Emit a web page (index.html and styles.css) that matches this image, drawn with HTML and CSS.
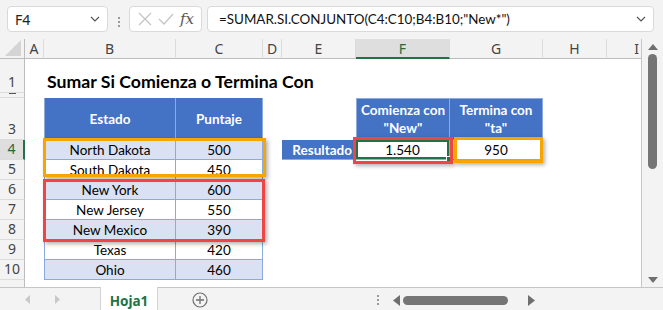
FILE: index.html
```html
<!DOCTYPE html>
<html lang="es">
<head>
    <meta charset="UTF-8">
    <meta name="viewport" content="width=device-width, initial-scale=1.0">
    <title>Sumar Si Comienza o Termina Con</title>
    <link rel="stylesheet" href="styles.css">
</head>
<body>

<div class="app">
    <!-- Barra de fórmulas -->
    <div class="formula-bar">
        <div class="name-box">
            <span>F4</span>
            <svg class="chev" width="10" height="6" viewBox="0 0 10 6"><path d="M1 1l4 4 4-4" fill="none" stroke="#555" stroke-width="1.2"/></svg>
        </div>
        <div class="grip"><i></i><i></i><i></i></div>
        <div class="fx-box">
            <svg width="14" height="14" viewBox="0 0 14 14"><path d="M1 1l12 12M13 1L1 13" stroke="#c4c4c4" stroke-width="1.3"/></svg>
            <svg width="16" height="12" viewBox="0 0 16 12"><path d="M1 6l5 5L15 1" fill="none" stroke="#c4c4c4" stroke-width="1.3"/></svg>
            <span class="fx">fx</span>
        </div>
        <div class="formula">
            <span>=SUMAR.SI.CONJUNTO(C4:C10;B4:B10;"New*")</span>
            <svg class="chev" width="10" height="6" viewBox="0 0 10 6"><path d="M1 1l4 4 4-4" fill="none" stroke="#555" stroke-width="1.2"/></svg>
        </div>
    </div>

    <div class="workspace">
        <div class="sheet">
            <!-- Encabezados de columna -->
            <div class="row col-head">
                <div class="corner"><svg width="16" height="16" viewBox="0 0 16 16"><path d="M16 0V16H0z" fill="#d4d4d4"/></svg></div>
                <div>A</div><div>B</div><div>C</div><div>D</div><div>E</div>
                <div class="sel">F</div><div>G</div><div>H</div><div>I</div>
            </div>

            <div class="row h34">
                <div class="rh">1</div><div></div>
                <div class="title">Sumar Si Comienza o Termina Con</div>
            </div>
            <div class="row h5">
                <div class="rh clipped"></div>
            </div>
            <div class="row h42">
                <div class="rh">3</div><div></div>
                <div class="th first">Estado</div>
                <div class="th">Puntaje</div>
                <div></div><div></div>
                <div class="th top first">Comienza con<br>"New"</div>
                <div class="th top">Termina con<br>"ta"</div>
            </div>
            <div class="row">
                <div class="rh sel">4</div><div></div>
                <div class="td first band">North Dakota</div>
                <div class="td band">500</div>
                <div></div>
                <div class="label">Resultado</div>
                <div class="res active">1.540<span class="handle"></span></div>
                <div class="res">950</div>
            </div>
            <div class="row">
                <div class="rh">5</div><div></div>
                <div class="td first">South Dakota</div><div class="td">450</div>
            </div>
            <div class="row">
                <div class="rh">6</div><div></div>
                <div class="td first band">New York</div><div class="td band">600</div>
            </div>
            <div class="row">
                <div class="rh">7</div><div></div>
                <div class="td first">New Jersey</div><div class="td">550</div>
            </div>
            <div class="row">
                <div class="rh">8</div><div></div>
                <div class="td first band">New Mexico</div><div class="td band">390</div>
            </div>
            <div class="row">
                <div class="rh">9</div><div></div>
                <div class="td first">Texas</div><div class="td">420</div>
            </div>
            <div class="row">
                <div class="rh">10</div><div></div>
                <div class="td first band">Ohio</div><div class="td band">460</div>
            </div>
            <div class="row">
                <div class="rh"></div>
            </div>

            <!-- Marcos de resaltado -->
            <div class="mark orange mark-dakota"></div>
            <div class="mark red mark-new"></div>
            <div class="mark red mark-f4"></div>
            <div class="mark orange mark-g4"></div>
        </div>

        <div class="vscroll">
            <svg width="12" height="8" viewBox="0 0 12 8"><path d="M6 1l5 6H1z" fill="#6f6f6f"/></svg>
            <div class="vthumb"></div>
            <div class="vtrack"></div>
            <svg width="12" height="8" viewBox="0 0 12 8"><path d="M1 1h10L6 7z" fill="#6f6f6f"/></svg>
        </div>
    </div>

    <!-- Pestañas de hojas -->
    <div class="tabs">
        <div class="nav">
            <svg width="6" height="9" viewBox="0 0 6 9"><path d="M5 0v9L0 4.5z" fill="#c8c8c8"/></svg>
            <svg width="6" height="9" viewBox="0 0 6 9"><path d="M1 0v9l5-4.5z" fill="#c8c8c8"/></svg>
        </div>
        <div class="tab">Hoja1</div>
        <div class="add">
            <svg width="16" height="16" viewBox="0 0 16 16"><circle cx="8" cy="8" r="7" fill="none" stroke="#707070" stroke-width="1.2"/><path d="M8 4v8M4 8h8" stroke="#707070" stroke-width="1.3"/></svg>
        </div>
        <div class="hscroll">
            <div class="grip-h"><i></i><i></i><i></i></div>
            <svg width="8" height="11" viewBox="0 0 8 11"><path d="M7 0v11L0 5.5z" fill="#6f6f6f"/></svg>
            <div class="hthumb"></div>
            <div class="htrack"></div>
            <svg width="8" height="11" viewBox="0 0 8 11"><path d="M1 0v11l7-5.5z" fill="#6f6f6f"/></svg>
        </div>
    </div>
</div>

</body>
</html>
```

FILE: styles.css
```css
* {
    box-sizing: border-box;
}
body {
    margin: 0;
    background-color: #f3f3f3;
    font-family: "Noto Sans", sans-serif;
    color: #000;
}
.app {
    width: 663px;
    height: 310px;
    overflow: hidden;
    display: flex;
    flex-direction: column;
}

/* Barra de fórmulas */
.formula-bar {
    height: 39px;
    flex: none;
    display: flex;
    padding: 6px 9px 0 7px;
}
.name-box, .fx-box, .formula {
    height: 26px;
    background-color: #fff;
    border: 1px solid #d9d9d9;
    border-radius: 4px;
    display: flex;
    align-items: center;
}
.name-box {
    width: 101px;
    justify-content: space-between;
    padding: 0 7px 0 7px;
    font-size: 14px;
    color: #222;
}
.grip {
    width: 21px;
    display: flex;
    flex-direction: column;
    align-items: center;
    justify-content: center;
    gap: 2px;
    padding-bottom: 1px;
}
.grip i, .grip-h i {
    width: 2px;
    height: 2px;
    background-color: #9a9a9a;
}
.fx-box {
    width: 73px;
    justify-content: space-between;
    padding: 0 7px 0 8px;
}
.fx {
    font-family: "DejaVu Serif", serif;
    font-style: italic;
    font-size: 15px;
    color: #555;
}
.formula {
    flex: 1;
    margin-left: 5px;
    justify-content: space-between;
    padding: 0 7px 0 11px;
    font-family: Lato, sans-serif;
    font-size: 13.4px;
    color: #111;
}

/* Hoja */
.workspace {
    height: 248px;
    flex: none;
    display: flex;
}
.sheet {
    position: relative;
    width: 642px;
    overflow: hidden;
    background-color: #fff;
    border-right: 1px solid #c6c6c6;
}
.row {
    display: grid;
    grid-template-columns: 25px 19px 132px 87px 19px 74px 94px 93px 64px 60px;
    grid-template-rows: 100%;
    height: 20px;
    font-family: Lato, sans-serif;
    font-size: 13.5px;
}
.row > div {
    min-height: 0;
    overflow: hidden;
}
.h34 { height: 34px; }
.h5 { height: 5px; }
.h42 { height: 42px; }

.col-head {
    background-color: #f3f3f3;
    font-family: "Noto Sans", sans-serif;
    font-size: 14px;
    color: #444;
}
.col-head div {
    display: flex;
    align-items: center;
    justify-content: center;
    border-right: 1px solid #dcdcdc;
    border-bottom: 1px solid #bcbcbc;
}
.col-head .corner {
    justify-content: flex-end;
    align-items: flex-end;
    padding: 0 3px 2px 0;
    border-right: 1px solid #bcbcbc;
}
.col-head .sel {
    background-color: #dedede;
    color: #1e6b41;
    border-bottom: 2px solid #217346;
}
.rh {
    background-color: #f3f3f3;
    border-right: 1px solid #bcbcbc;
    border-bottom: 1px solid #dcdcdc;
    display: flex;
    align-items: flex-end;
    justify-content: center;
    padding-bottom: 1px;
    font-family: "Noto Sans", sans-serif;
    font-size: 14px;
    line-height: 18px;
    color: #444;
}
.rh.clipped {
    align-items: flex-start;
    padding-top: 0;
}
.rh.clipped::after {
    content: "";
    width: 7px;
    height: 1px;
    background-color: #555;
}
.rh.sel {
    background-color: #dedede;
    color: #1e6b41;
    border-right: 2px solid #217346;
}
.row > .title {
    grid-column: 3 / -1;
    align-self: end;
    overflow: visible;
    padding: 0 0 1px 3px;
    font-size: 17.7px;
    font-weight: bold;
    white-space: nowrap;
}

/* Tablas */
.th, .td, .label, .res {
    display: flex;
    align-items: center;
    justify-content: center;
    text-align: center;
    border-right: 1px solid #8ea9db;
    border-bottom: 1px solid #8ea9db;
}
.td, .label, .res {
    padding-top: 1px;
}
.first {
    border-left: 1px solid #8ea9db;
}
.th {
    background-color: #4472c4;
    color: #fff;
    font-weight: bold;
    line-height: 18px;
}
.th.top {
    border-top: 1px solid #8ea9db;
}
.td.band {
    background-color: #d9e1f2;
}
.label {
    justify-content: flex-end;
    padding-right: 3px;
    background-color: #4472c4;
    color: #fff;
    font-weight: bold;
}
.row > .res {
    position: relative;
    overflow: visible;
}
.res.active {
    box-shadow: inset 0 0 0 2px #217346;
}
.handle {
    position: absolute;
    right: -3px;
    bottom: -3px;
    width: 6px;
    height: 6px;
    background-color: #217346;
    border: 1px solid #fff;
}

/* Marcos de resaltado */
.mark {
    position: absolute;
    border: 3px solid;
    box-shadow: 2px 2px 4px rgba(0, 0, 0, 0.3);
    pointer-events: none;
}
.orange {
    border-color: #f7a500;
}
.red {
    border-color: #ef4545;
}
.mark-dakota {
    left: 43px;
    top: 99px;
    width: 223px;
    height: 39px;
}
.mark-new {
    left: 43px;
    top: 140px;
    width: 222px;
    height: 63px;
}
.mark-f4 {
    left: 353px;
    top: 98px;
    width: 100px;
    height: 27px;
}
.mark-g4 {
    left: 454px;
    top: 98px;
    width: 89px;
    height: 26px;
}

/* Barra de desplazamiento vertical */
.vscroll {
    flex: 1;
    display: flex;
    flex-direction: column;
    align-items: center;
    padding: 4px 0 3px;
}
.vthumb {
    width: 9px;
    height: 115px;
    margin-top: 3px;
    border-radius: 5px;
    background-color: #757575;
}
.vtrack {
    flex: 1;
}

/* Pestañas */
.tabs {
    height: 23px;
    flex: none;
    display: flex;
    align-items: stretch;
    border-top: 1px solid #c6c6c6;
}
.nav {
    width: 100px;
    display: flex;
    align-items: center;
    gap: 23px;
    padding-left: 25px;
}
.tab {
    width: 58px;
    background-color: #fff;
    border-left: 1px solid #d4d4d4;
    border-right: 1px solid #d4d4d4;
    margin-top: -1px;
    display: flex;
    align-items: center;
    justify-content: center;
    padding-top: 4px;
    font-family: "Noto Sans", sans-serif;
    font-size: 13.5px;
    font-weight: bold;
    color: #217346;
}
.add {
    width: 84px;
    display: flex;
    align-items: center;
    justify-content: center;
    padding-top: 2px;
}
.hscroll {
    margin-left: 121px;
    flex: 1;
    display: flex;
    align-items: center;
    padding-top: 2px;
}
.grip-h {
    width: 30px;
    display: flex;
    flex-direction: column;
    align-items: center;
    gap: 2px;
}
.hthumb {
    width: 105px;
    height: 9px;
    margin-left: 2px;
    border-radius: 5px;
    background-color: #757575;
}
.htrack {
    width: 19px;
}
```
